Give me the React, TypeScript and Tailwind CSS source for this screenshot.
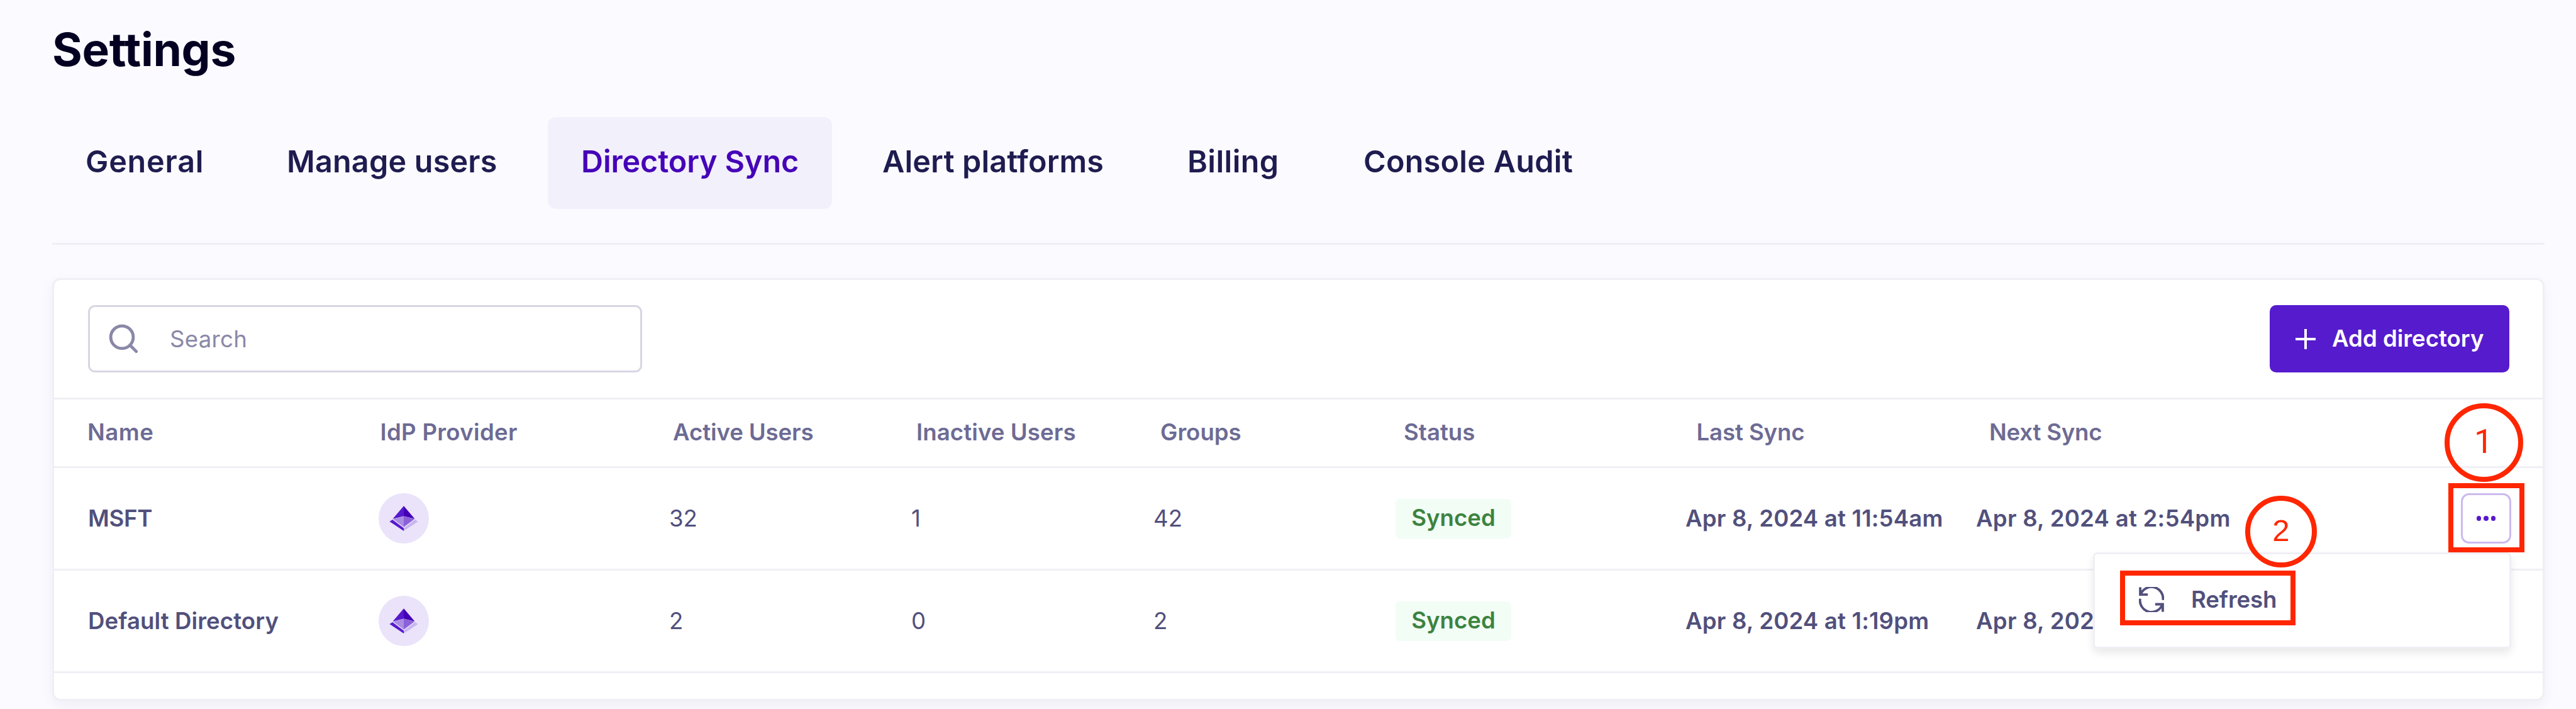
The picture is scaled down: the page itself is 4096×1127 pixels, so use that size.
type Directory = {
  name: string;
  nameStyle: string;
  active: string;
  inactive: string;
  groups: string;
  last: string;
  next: string;
};

const tabs = [
  { label: "General", style: "w-[293px] tracking-[0.8px]" },
  { label: "Manage users", style: "w-[441px] tracking-[0.2px]" },
  { label: "Directory Sync", style: "w-[452px] tracking-[-0.12px]" },
  { label: "Alert platforms", style: "w-[458px] tracking-[0.15px]" },
  { label: "Billing", style: "w-[253px] tracking-[0.4px]" },
  { label: "Console Audit", style: "w-[441px] tracking-[0.25px]" },
];

const headings = [
  { label: "Name", style: "tracking-[0.5px]" },
  { label: "IdP Provider", style: "tracking-[0.3px]" },
  { label: "Active Users", style: "tracking-[-0.1px]" },
  { label: "Inactive Users", style: "-ml-[1px] tracking-[0.1px]" },
  { label: "Groups", style: "-ml-[1px] tracking-[0px]" },
  { label: "Status", style: "-ml-[2px] tracking-[0px]" },
  { label: "Last Sync", style: "-ml-[2px] tracking-[-0.1px]" },
  { label: "Next Sync", style: "-ml-[2px] tracking-[-0.2px]" },
];

const directories: Directory[] = [
  { name: "MSFT", nameStyle: "tracking-[-0.3px]", active: "32", inactive: "1", groups: "42", last: "Apr 8, 2024 at 11:54am", next: "Apr 8, 2024 at 2:54pm" },
  { name: "Default Directory", nameStyle: "tracking-[0.1px]", active: "2", inactive: "0", groups: "2", last: "Apr 8, 2024 at 1:19pm", next: "Apr 8, 2024 at 4:19pm" },
];

function SearchIcon() {
  return (
    <svg viewBox="0 0 56 56" className="size-[47px] shrink-0" fill="none" stroke="#8a88a8" strokeWidth="5.8">
      <circle cx="25" cy="25" r="21.3" />
      <path d="M40.5 40.5 L52 52" strokeLinecap="round" />
    </svg>
  );
}

function ProviderLogo() {
  return (
    <span className="flex size-[80px] items-center justify-center rounded-full bg-[#eae3fa]">
      <svg viewBox="0 0 96 96" className="size-[80px]">
        <path d="M48 24.3 L27 49 L48 43.7 Z" fill="#5719cc" />
        <path d="M48 24.3 L69 49 L48 43.7 Z" fill="#4400b6" />
        <path d="M27.5 49.3 L48 43.7 V64.5 Z" fill="#aa8de3" />
        <path d="M68.5 49.3 L48 43.7 V64.5 Z" fill="#8b60d8" />
        <path d="M21 54 L26.5 50.5 L48 66.5 V72 Z" fill="#5719cc" />
        <path d="M75 54 L69.5 50.5 L48 66.5 V72 Z" fill="#c8b5ef" />
      </svg>
    </span>
  );
}

function RefreshIcon() {
  return (
    <svg viewBox="0 0 48 48" className="size-[40px] shrink-0" fill="none" stroke="#51507c" strokeWidth="4.6">
      <path d="M2.5 0.5 V14.5 H17" />
      <path d="M3.5 14 A22 22 0 0 1 45.8 25" />
      <path d="M45.5 47.5 V33 H31" />
      <path d="M44.5 34 A22 22 0 0 1 2.3 22.5" />
    </svg>
  );
}

function Row({ directory, menu }: { directory: Directory; menu?: boolean }) {
  return (
    <div className="grid h-[163px] grid-cols-[462px_462px_385px_385px_385px_462px_462px_1fr] items-center border-t-[3px] border-[#f0eff5] pr-[50px] pl-[54px] text-[36.6px] font-semibold whitespace-nowrap text-[#51507c]">
      <span className={directory.nameStyle}>{directory.name}</span>
      <ProviderLogo />
      <span className="font-normal">{directory.active}</span>
      <span className="font-normal">{directory.inactive}</span>
      <span className="font-normal">{directory.groups}</span>
      <span className="flex h-[63px] w-[184px] items-center justify-center rounded-[7px] bg-[#f2fdf5] pb-[1px] text-[#3c8340]">
        Synced
      </span>
      <span className="-ml-[1px] tracking-[0.18px]">{directory.last}</span>
      <div className="flex items-center justify-between">
        <span className="-ml-[1px] tracking-[0.25px]">{directory.next}</span>
        {menu && (
          <button className="flex size-[80px] items-center justify-center gap-[4.4px] rounded-[13px] border-[3px] border-[#cbbaef]">
            <i className="size-[7.2px] rounded-full bg-[#5719cc]" />
            <i className="size-[7.2px] rounded-full bg-[#5719cc]" />
            <i className="size-[7.2px] rounded-full bg-[#5719cc]" />
          </button>
        )}
      </div>
    </div>
  );
}

export default function App() {
  return (
    <div className="relative h-[1127px] w-[4096px] overflow-hidden bg-[#fbfaff] pr-[50px] pl-[83px] font-['Inter',sans-serif]">
      <h1 className="h-[186px] pt-[39px] text-[73px] leading-[80px] font-bold tracking-[-0.3px] text-[#030022]">Settings</h1>

      <nav className="flex h-[203px] gap-[27px] border-b-[3px] border-[#f0eff5]">
        {tabs.map((tab) => (
          <a
            key={tab.label}
            className={`flex h-[146px] items-center rounded-[13px] pb-[3px] pl-[53px] text-[48.5px] font-semibold whitespace-nowrap ${tab.style} ${
              tab.label === "Directory Sync" ? "bg-[#f2f0fb] text-[#4503b8]" : "text-[#1e1c4f]"
            }`}
          >
            {tab.label}
          </a>
        ))}
      </nav>

      <section className="mt-[53px] h-[672px] rounded-[13px] border-[3px] border-[#f0eff5] bg-white shadow-[0_7px_20px_rgba(30,28,79,0.05)]">
        <div className="flex h-[187px] items-center justify-between pr-[53px] pl-[54px]">
          <div className="flex h-[107px] w-[881px] items-center rounded-[11px] border-[3px] border-[#d7d6e3] pl-[30px]">
            <SearchIcon />
            <span className="ml-[50px] pt-[1px] text-[36.6px] tracking-[0.3px] text-[#8a88a8]">Search</span>
          </div>
          <button className="flex h-[107px] w-[381px] items-center rounded-[10px] bg-[#561bcd] pl-[41px] text-white">
            <svg viewBox="0 0 32 32" className="size-[32px] shrink-0" stroke="currentColor" strokeWidth="4">
              <path d="M16 0 V32 M0 16 H32" />
            </svg>
            <span className="ml-[26px] pb-[1px] text-[36.6px] font-semibold whitespace-nowrap">Add directory</span>
          </button>
        </div>

        <div className="grid h-[109px] grid-cols-[465.5px_465.5px_388px_388px_388px_465.5px_465.5px_1fr] items-center border-t-[3px] border-[#f0eff5] pb-[1px] pl-[53px] text-[36.6px] font-semibold text-[#6d6b94]">
          {headings.map((heading) => (
            <span key={heading.label} className={heading.style}>
              {heading.label}
            </span>
          ))}
        </div>
        <Row directory={directories[0]} menu />
        <Row directory={directories[1]} />
        <div className="border-t-[3px] border-[#f0eff5]" />
      </section>

      <div className="absolute top-[878px] left-[3328px] h-[153px] w-[665px] rounded-[7px] border-[3px] border-[#f0eff5] bg-white shadow-[0_7px_14px_rgba(0,0,0,0.09)]">
        <div className="flex h-[144px] items-center pl-[70px]">
          <RefreshIcon />
          <span className="ml-[43px] text-[36.6px] font-semibold tracking-[-0.1px] text-[#51507c]">Refresh</span>
        </div>
      </div>

      <div className="absolute top-[907px] left-[3371px] h-[87px] w-[279px] border-[8px] border-[#ff2600]" />
      <div className="absolute top-[768px] left-[3893px] h-[110px] w-[121px] border-[8px] border-[#ff2600]" />
      <div className="absolute top-[641px] left-[3887px] flex size-[125px] items-center justify-center rounded-full border-[8px] border-[#ff2600] pr-[1px] pb-[2px] font-['Roboto',sans-serif] text-[53px] leading-none text-[#ff2600]">
        1
      </div>
      <div className="absolute top-[788px] left-[3570px] flex size-[114px] items-center justify-center rounded-full border-[8px] border-[#ff2600] pb-[3px] font-['Liberation_Sans',sans-serif] text-[49px] leading-none text-[#ff2600]">
        2
      </div>
    </div>
  );
}
